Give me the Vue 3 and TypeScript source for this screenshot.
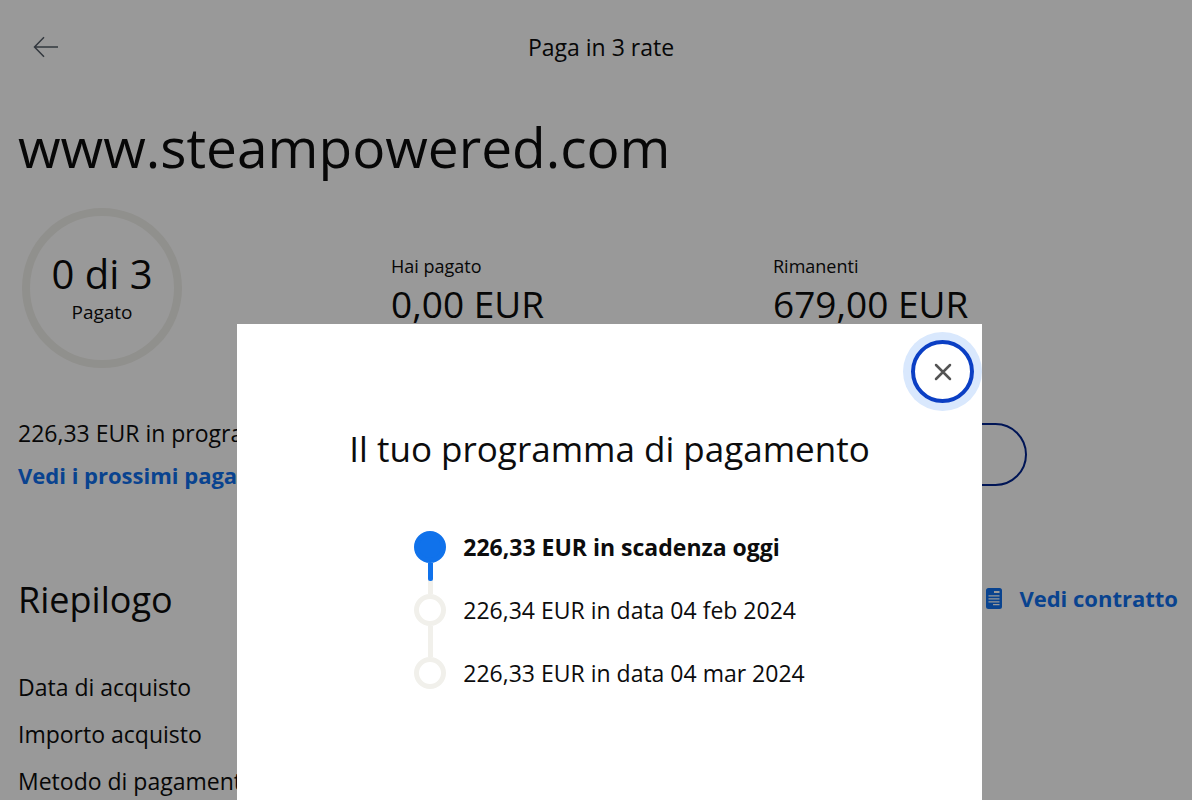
<script setup lang="ts">
interface Stat {
  label: string
  value: string
}

interface Installment {
  text: string
  due: boolean
}

const stats: Stat[] = [
  { label: 'Hai pagato', value: '0,00 EUR' },
  { label: 'Rimanenti', value: '679,00 EUR' },
]

const installments: Installment[] = [
  { text: '226,33 EUR in scadenza oggi', due: true },
  { text: '226,34 EUR in data 04 feb 2024', due: false },
  { text: '226,33 EUR in data 04 mar 2024', due: false },
]

const summary: string[] = ['Data di acquisto', 'Importo acquisto', 'Metodo di pagamento']
</script>

<template>
  <div class="app">
    <main class="page">
      <header class="topbar">
        <button class="back" type="button" aria-label="Indietro">
          <svg width="26" height="22" viewBox="0 0 26 22" fill="none" stroke="currentColor" stroke-width="1.5">
            <path d="M25 11H1.5M11 1.2L1.5 11l9.5 9.8" />
          </svg>
        </button>
        <span class="topbar-title">Paga in 3 rate</span>
      </header>

      <h1 class="merchant">www.steampowered.com</h1>

      <section class="stats">
        <div class="ring">
          <span class="ring-count">0 di 3</span>
          <span class="ring-label">Pagato</span>
        </div>
        <div v-for="stat in stats" :key="stat.label" class="stat">
          <span class="stat-label">{{ stat.label }}</span>
          <span class="stat-value">{{ stat.value }}</span>
        </div>
      </section>

      <section class="upcoming">
        <div class="upcoming-text">
          <span>226,33 EUR in programma</span>
          <a class="link" href="#programma">Vedi i prossimi pagamenti</a>
        </div>
        <button class="pay" type="button" aria-label="Paga ora"></button>
      </section>

      <section class="summary">
        <div class="summary-head">
          <h2 class="summary-title">Riepilogo</h2>
          <a class="link contract" href="#contratto">
            <svg width="16" height="21" viewBox="0 0 16 21" aria-hidden="true">
              <path
                fill="currentColor"
                fill-rule="evenodd"
                d="M2.500 0h11A2.500 2.500 0 0 1 16 2.500v16a2.500 2.500 0 0 1-2.500 2.500h-11A2.500 2.500 0 0 1 0 18.500v-16A2.500 2.500 0 0 1 2.500 0zM8 3v2h5.500V3zM2.500 7.300v1.200h11V7.300zM2.500 10.300v1.200h11v-1.200zM2.500 13.300v1.200h11v-1.200zM7 16v1.200h6.500V16z"
              />
            </svg>
            <span>Vedi contratto</span>
          </a>
        </div>
        <ul class="summary-list">
          <li v-for="item in summary" :key="item">{{ item }}</li>
        </ul>
      </section>
    </main>

    <div class="overlay">
      <div class="modal" role="dialog" aria-modal="true" aria-labelledby="modal-title">
        <div class="modal-bar">
          <button class="close" type="button" aria-label="Chiudi">
            <svg width="18" height="18" viewBox="0 0 18 18" fill="none" stroke="currentColor" stroke-width="2.500" stroke-linecap="round">
              <path d="M2 2l14 14M16 2L2 16" />
            </svg>
          </button>
        </div>
        <h2 id="modal-title" class="modal-title">Il tuo programma di pagamento</h2>
        <ol class="timeline">
          <li v-for="item in installments" :key="item.text" class="step" :class="{ due: item.due }">
            <span class="marker"><span class="dot"></span></span>
            <span>{{ item.text }}</span>
          </li>
        </ol>
      </div>
    </div>
  </div>
</template>

<style>
body {
  margin: 0;
}
</style>

<style scoped>
.app {
  height: 100vh;
  overflow: hidden;
  background: #fff;
  color: #0c0c0d;
  font-family: "Open Sans", "Noto Sans", sans-serif;
  font-size: 23px;
  line-height: 42px;
}

.app * {
  box-sizing: border-box;
}

h1,
h2,
ul,
ol {
  margin: 0;
  padding: 0;
  font-weight: 400;
  list-style: none;
}

button {
  padding: 0;
  border: 0;
  background: none;
  font: inherit;
}

svg {
  display: block;
}

.page {
  padding: 0 8px 0 18px;
}

.topbar {
  display: grid;
  grid-template-columns: 1fr auto 1fr;
  align-items: center;
  height: 94px;
}

.back {
  justify-self: start;
  margin-left: 15px;
  color: #545d68;
}

.merchant {
  margin-top: 16px;
  font-size: 55px;
  font-weight: 500;
  line-height: 74px;
}

.stats {
  display: grid;
  grid-template-columns: 373fr 382fr 382fr;
  align-items: center;
  margin-top: 24px;
  padding-right: 29px;
}

.ring {
  display: flex;
  flex-direction: column;
  align-items: center;
  justify-content: center;
  width: 160px;
  height: 160px;
  margin-left: 4px;
  padding-top: 3px;
  border: 8px solid #f1f0eb;
  border-radius: 50%;
}

.ring-count {
  font-size: 40px;
  line-height: 44px;
}

.ring-label {
  font-size: 19px;
  line-height: 32px;
}

.stat {
  display: flex;
  flex-direction: column;
}

.stat-label {
  font-size: 18px;
  line-height: 32px;
}

.stat-value {
  font-size: 37px;
  line-height: 44px;
}

.upcoming {
  display: flex;
  align-items: center;
  justify-content: space-between;
  margin-top: 44px;
  padding-right: 157px;
}

.upcoming-text {
  display: flex;
  flex-direction: column;
}

.link {
  color: #0f70ef;
  font-size: 22px;
  font-weight: 700;
  text-decoration: none;
}

.pay {
  width: 254px;
  height: 63px;
  border: 2px solid #00248f;
  border-radius: 32px;
}

.summary {
  margin-top: 80px;
}

.summary-head {
  display: flex;
  align-items: flex-start;
  justify-content: space-between;
  padding-right: 6px;
}

.summary-title {
  font-size: 36px;
  line-height: 48px;
}

.contract {
  display: flex;
  align-items: center;
  gap: 17px;
  line-height: 44px;
}

.summary-list {
  margin-top: 40px;
  line-height: 47px;
}

.overlay {
  position: fixed;
  inset: 0;
  display: flex;
  justify-content: center;
  padding: 324px 0 0 27px;
  background: rgba(0, 0, 0, 0.4);
}

.modal {
  width: 64%;
  background: #fff;
}

.modal-bar {
  display: flex;
  justify-content: flex-end;
  padding: 16px 8px 0;
}

.close {
  display: grid;
  place-items: center;
  width: 63px;
  height: 63px;
  border: 4px solid #0b3fc4;
  border-radius: 50%;
  box-shadow: 0 0 0 8px #d9e8fd;
  color: #545454;
}

.modal-title {
  margin-top: 22px;
  font-size: 35px;
  line-height: 48px;
  text-align: center;
}

.timeline {
  width: fit-content;
  margin: 42px auto 0;
}

.step {
  display: flex;
  align-items: center;
  gap: 17px;
  height: 63px;
}

.marker {
  display: flex;
  flex-direction: column;
  align-items: center;
  width: 32px;
  height: 63px;
}

.marker::before,
.marker::after {
  content: "";
  flex: 1;
  width: 5px;
  background: #f1f0eb;
}

.step:first-child .marker::before,
.step:last-child .marker::after {
  background: none;
}

.dot {
  width: 32px;
  height: 32px;
  border: 5px solid #f1f0eb;
  border-radius: 50%;
}

.due {
  position: relative;
  font-weight: 700;
}

.due .dot {
  border-color: #1072eb;
  background: #1072eb;
}

.due .marker::after {
  border-radius: 0 0 2px 2px;
  background: #1072eb;
  box-shadow: 0 3px 0 #1072eb;
}
</style>
